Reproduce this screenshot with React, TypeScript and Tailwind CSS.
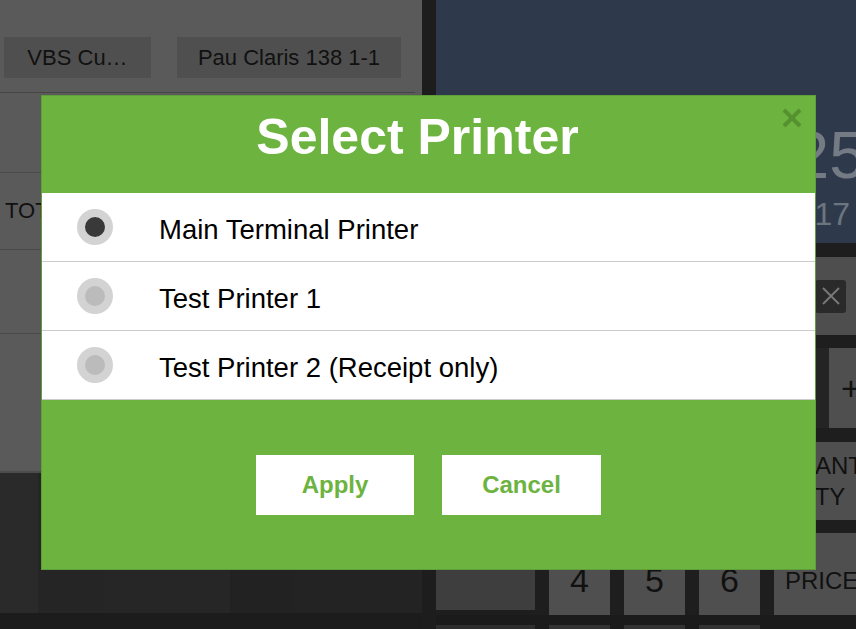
import React from "react";

const printers = [
  { name: "Main Terminal Printer", selected: true },
  { name: "Test Printer 1", selected: false },
  { name: "Test Printer 2 (Receipt only)", selected: false },
];

export default function App() {
  return (
    <div className="relative w-[856px] h-[629px] overflow-hidden bg-[#1e1e1e] font-['Liberation_Sans',Arial,sans-serif]">
      {/* Background app (dimmed) */}
      <div className="flex h-full">
        {/* Left panel */}
        <div className="w-[422px] shrink-0 flex flex-col">
          <div className="h-[473px] bg-[#5a5a5a] flex flex-col border-b-[2px] border-[#4c4c4c]">
            <div className="flex gap-[26px] pl-[4px] pt-[37px] h-[93px] border-b border-[#464646] w-[415px]">
              <div className="w-[147px] h-[41px] bg-[#4f4f4f] flex items-center justify-center text-[22px] text-[#111]">
                VBS Cu…
              </div>
              <div className="w-[224px] h-[41px] bg-[#4f4f4f] flex items-center justify-center text-[22px] text-[#111]">
                Pau Claris 138 1-1
              </div>
            </div>
            <div className="h-[80px] border-b border-[#4a4a4a]" />
            <div className="h-[77px] border-b border-[#4a4a4a] flex items-center pl-[5px] text-[22px] text-[#111] pb-[2px]">
              TOTAL
            </div>
            <div className="h-[84px] border-b border-[#4a4a4a]" />
            <div className="flex-1" />
          </div>
          <div className="flex-1 flex flex-col bg-[#232323]">
            <div className="h-[140px] flex">
              <div className="w-[38px] bg-[#2a2a2a]" />
              <div className="w-[66px] bg-[#252525]" />
              <div className="w-[126px] bg-[#262626]" />
              <div className="w-[64px] bg-[#222222]" />
              <div className="flex-1 bg-[#232323]" />
            </div>
            <div className="flex-1 bg-[#1c1c1c]" />
          </div>
        </div>
        {/* Divider */}
        <div className="w-[14px] shrink-0 bg-[#1d1d1d]" />
        {/* Right panel */}
        <div className="flex-1 min-w-0 overflow-hidden flex flex-col">
          <div className="h-[243px] bg-[#2e3a4b] flex flex-col items-end pt-[122px] text-[#757b84] leading-none whitespace-nowrap">
            <div className="text-[66px] -mr-[10px]">25</div>
            <div className="text-[32px] mt-[10px] pr-[6px] text-[#6c7480]">17</div>
          </div>
          <div className="h-[14px] bg-[#1e1e1e]" />
          <div className="h-[78px] bg-[#4e4e4e] flex items-center justify-end pr-[10px]">
            <div className="w-[31px] h-[33px] rounded-[3px] bg-[#2a2a2a] flex items-center justify-center">
              <svg width="22" height="22" viewBox="0 0 22 22">
                <path d="M3 3 L19 19 M19 3 L3 19" stroke="#777" strokeWidth="2" />
              </svg>
            </div>
          </div>
          <div className="h-[13px] bg-[#1e1e1e]" />
          <div className="h-[80px] bg-[#242424] flex justify-end">
            <div className="w-[27px] bg-[#4f4f4f] flex items-center pl-[12px] text-[34px] text-[#111]">+</div>
          </div>
          <div className="h-[14px] bg-[#1e1e1e]" />
          <div className="h-[78px] bg-[#4f4f4f] flex justify-end">
            <div className="w-[77px] flex flex-col justify-center text-[24px] leading-[31px] text-[#111] whitespace-nowrap">
              <div>QUANT</div>
              <div className="ml-[29px]">ITY</div>
            </div>
          </div>
          <div className="h-[13px] bg-[#1e1e1e]" />
          <div className="h-[82px] flex gap-[14px] bg-[#1e1e1e]">
            <div className="w-[99px] shrink-0 flex flex-col">
              <div className="flex-1 bg-[#2c2c2c]" />
              <div className="h-[40px] bg-[#3e3e3e] mb-[5px]" />
            </div>
            <div className="w-[61px] shrink-0 bg-[#4f4f4f] flex items-end justify-center pb-[18px] text-[34px] leading-none text-[#111]">4</div>
            <div className="w-[61px] shrink-0 bg-[#4f4f4f] flex items-end justify-center pb-[18px] text-[34px] leading-none text-[#111]">5</div>
            <div className="w-[61px] shrink-0 bg-[#4f4f4f] flex items-end justify-center pb-[18px] text-[34px] leading-none text-[#111]">6</div>
            <div className="flex-1 bg-[#4f4f4f] flex items-end pl-[11px] pb-[22px] text-[24px] leading-none text-[#111] whitespace-nowrap overflow-hidden">PRICE</div>
          </div>
          <div className="flex-1 flex gap-[14px] bg-[#1b1b1b] pt-[10px]">
            <div className="w-[99px] shrink-0 bg-[#2e2e2e]" />
            <div className="w-[61px] shrink-0 bg-[#333]" />
            <div className="w-[61px] shrink-0 bg-[#333]" />
            <div className="w-[61px] shrink-0 bg-[#333]" />
          </div>
        </div>
      </div>

      {/* Modal */}
      <div className="absolute left-[41px] top-[95px] w-[775px] h-[475px] border border-[#5f9e39] flex flex-col bg-[#6db33f]">
        <div className="relative h-[97px] shrink-0 bg-[#6db33f] flex items-start justify-center pt-[12px] pr-[22px]">
          <h1 className="text-[50px] font-bold text-white leading-[58px]">Select Printer</h1>
          <div className="absolute right-[13px] top-[12px]">
            <svg width="20" height="20" viewBox="0 0 20 20">
              <path d="M2 2 L18 18 M18 2 L2 18" stroke="#569130" strokeWidth="4" />
            </svg>
          </div>
        </div>
        <div className="bg-white flex flex-col shrink-0">
          {printers.map((p) => (
            <div key={p.name} className="h-[69px] flex items-center border-b border-[#cccccc]">
              <div className="w-[36px] h-[36px] ml-[35px] rounded-full bg-[#d3d3d3] flex items-center justify-center">
                <div className={`w-[20px] h-[20px] rounded-full ${p.selected ? "bg-[#393939]" : "bg-[#bbbbbb]"}`} />
              </div>
              <span className="ml-[46px] pt-[5px] text-[27.5px] text-black">{p.name}</span>
            </div>
          ))}
        </div>
        <div className="flex-1 bg-[#6db33f] flex items-center justify-center gap-[28px]">
          <button className="w-[158px] h-[60px] bg-white text-[#6db33f] text-[24px] font-bold">Apply</button>
          <button className="w-[159px] h-[60px] bg-white text-[#6db33f] text-[24px] font-bold">Cancel</button>
        </div>
      </div>
    </div>
  );
}
